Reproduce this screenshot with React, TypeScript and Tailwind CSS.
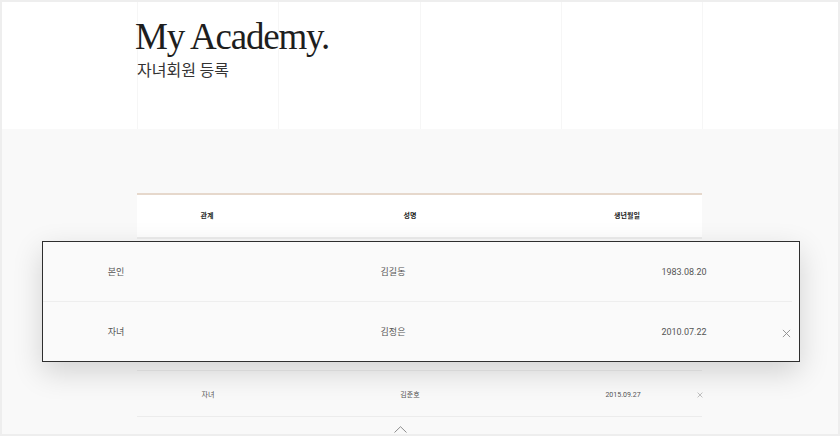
import React from 'react';

interface Member {
  relation: string;
  name: string;
  birth: string;
  removable: boolean;
}

const FOCUSED: Member[] = [
  { relation: '본인', name: '김길동', birth: '1983.08.20', removable: false },
  { relation: '자녀', name: '김정은', birth: '2010.07.22', removable: true },
];

const REST: Member[] = [{ relation: '자녀', name: '김준호', birth: '2015.09.27', removable: true }];

const sans = "font-['Roboto','Noto_Sans_CJK_KR',sans-serif]";

const CloseIcon = ({ size, color = '#8a8a8a' }: { size: number; color?: string }) => (
  <svg width={size} height={size} viewBox="0 0 10 10" fill="none">
    <path d="M1 1L9 9M9 1L1 9" stroke={color} strokeWidth="1" />
  </svg>
);

export default function App() {
  return (
    <div className="w-[840px] h-[436px] bg-[#eeeeee] p-[2px] overflow-hidden">
      <div className="w-full h-full bg-[#f9f9f9] flex flex-col overflow-hidden">
        {/* top banner */}
        <div className="relative h-[127px] bg-white shrink-0">
          <div className="absolute top-0 bottom-0 left-[135px] w-[566px] grid grid-cols-4 border-l border-[#f6f6f6]">
            <div className="border-r border-[#f6f6f6]" />
            <div className="border-r border-[#f6f6f6]" />
            <div className="border-r border-[#f6f6f6]" />
            <div className="border-r border-[#f6f6f6]" />
          </div>
          <div className="relative pl-[133px] pt-[16px]">
            <h1 className="font-['Liberation_Serif',serif] text-[37px] leading-none tracking-[-1.2px] text-[#1e1e1e]">
              My Academy.
            </h1>
            <p className="mt-[6px] pl-[2px] font-['Noto_Sans_CJK_KR',sans-serif] text-[16px] leading-none text-[#333]">
              자녀회원 등록
            </p>
          </div>
        </div>

        {/* member table */}
        <div className="pt-[64px] pl-[135px]">
          <div className="w-[565px]">
            <div className={`flex items-center h-[46px] bg-white border-t-2 border-[#e6d8cc] border-b-2 border-b-[#ededed] ${sans} text-[7px] font-bold text-[#222]`}>
              <div className="w-[140px] shrink-0 text-center">관계</div>
              <div className="w-[266px] shrink-0 text-center">성명</div>
              <div className="w-[168px] shrink-0 text-center">생년월일</div>
            </div>

            {/* enlarged focus rows */}
            <div className="relative mt-[2px] -ml-[95px] w-[758px] bg-[#fafafa] border border-[#2e2e2e] shadow-[0_10px_28px_rgba(0,0,0,0.16)]">
              {FOCUSED.map((m, i) => (
                <div key={m.name}>
                  {i > 0 && <div className="h-[1px] mr-[7px] bg-[#eeeeee]" />}
                  <div className={`grid grid-cols-[146px_408px_174px_1fr] items-center h-[59px] pt-[3px] ${sans} text-[9px] text-[#555]`}>
                    <div className="text-center">{m.relation}</div>
                    <div className="text-center">{m.name}</div>
                    <div className="text-center">{m.birth}</div>
                    <div className="flex justify-center pl-[2px]">
                      {m.removable && <CloseIcon size={9} />}
                    </div>
                  </div>
                </div>
              ))}
            </div>

            <div className="mt-[8px] border-t border-b border-[#ececec]">
              {REST.map((m) => (
                <div key={m.name} className={`flex items-center h-[45px] pt-[3px] ${sans} text-[7px] text-[#555]`}>
                  <div className="w-[142px] shrink-0 text-center">{m.relation}</div>
                  <div className="w-[262px] shrink-0 text-center">{m.name}</div>
                  <div className="w-[164px] shrink-0 text-center">{m.birth}</div>
                  <div className="w-[10px] shrink-0 -ml-[10px] flex justify-center">
                    {m.removable && <CloseIcon size={6} color="#999" />}
                  </div>
                </div>
              ))}
            </div>

            <div className="mt-[9px] ml-[257px]">
              <svg width="13" height="7" viewBox="0 0 13 7" fill="none">
                <path d="M0.5 6.5L6.5 0.7L12.5 6.5" stroke="#8c8c8c" strokeWidth="1" />
              </svg>
            </div>
          </div>
        </div>
      </div>
    </div>
  );
}
